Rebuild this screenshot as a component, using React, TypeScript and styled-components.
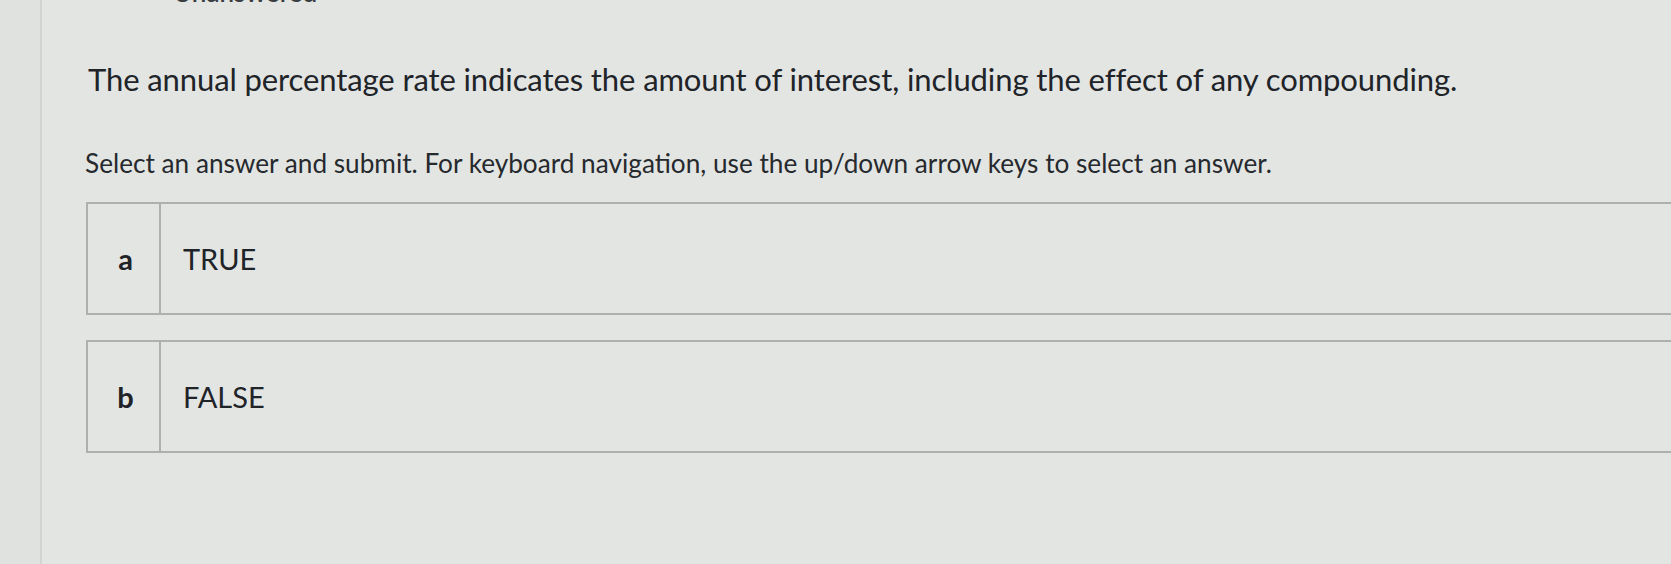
import React from 'react';
import styled, { createGlobalStyle } from 'styled-components';

const GlobalStyle = createGlobalStyle`
  html, body {
    margin: 0;
    padding: 0;
    background: #e3e5e2;
  }
  body {
    font-family: Lato, 'Noto Sans', sans-serif;
    color: #25282d;
    overflow: hidden;
  }
`;

const answers = [
  { key: 'a', label: 'TRUE' },
  { key: 'b', label: 'FALSE' },
];

export default function App() {
  return (
    <>
      <GlobalStyle />
      <Page>
        <Rail />
        <Main>
          <Status>Unanswered</Status>
          <Question>
            The annual percentage rate indicates the amount of interest, including the effect of any compounding.
          </Question>
          <Hint>
            Select an answer and submit. For keyboard navigation, use the up/down arrow keys to select an answer.
          </Hint>
          <Choices>
            {answers.map((a) => (
              <Choice key={a.key}>
                <Letter>{a.key}</Letter>
                <Label>{a.label}</Label>
              </Choice>
            ))}
          </Choices>
        </Main>
      </Page>
    </>
  );
}

const Page = styled.div`
  display: flex;
  width: 1671px;
  height: 564px;
`;

const Rail = styled.div`
  width: 40px;
  flex-shrink: 0;
  background: #e0e2df;
  border-right: 2px solid #d2d4d1;
`;

const Main = styled.main`
  flex: 1;
  padding-left: 44px;
  display: flex;
  flex-direction: column;
`;

const Status = styled.div`
  font-size: 26px;
  line-height: 26px;
  margin-top: -21px;
  margin-left: 87px;
  font-weight: 600;
  color: #3a3d42;
`;

const Question = styled.h1`
  margin: 54px 0 0 2px;
  font-size: 31px;
  line-height: 40px;
  font-weight: 400;
  white-space: nowrap;
  letter-spacing: -0.1px;
  color: #202328;
`;

const Hint = styled.p`
  margin: 48px 0 0 -1px;
  font-size: 26.2px;
  line-height: 32px;
  white-space: nowrap;
  color: #26292e;
`;

const Choices = styled.div`
  display: flex;
  flex-direction: column;
  gap: 25px;
  margin-top: 23px;
  margin-right: -20px;
`;

const Choice = styled.div`
  display: flex;
  height: 113px;
  box-sizing: border-box;
  border: 2px solid #aeb0ad;
  border-right: none;
`;

const Letter = styled.div`
  width: 73px;
  flex-shrink: 0;
  box-sizing: border-box;
  padding-left: 4px;
  border-right: 2px solid #aeb0ad;
  display: flex;
  align-items: center;
  justify-content: center;
  font-size: 29px;
  font-weight: 700;
  color: #1f2227;
`;

const Label = styled.div`
  display: flex;
  align-items: center;
  padding-left: 22px;
  font-size: 29px;
  color: #202328;
`;
